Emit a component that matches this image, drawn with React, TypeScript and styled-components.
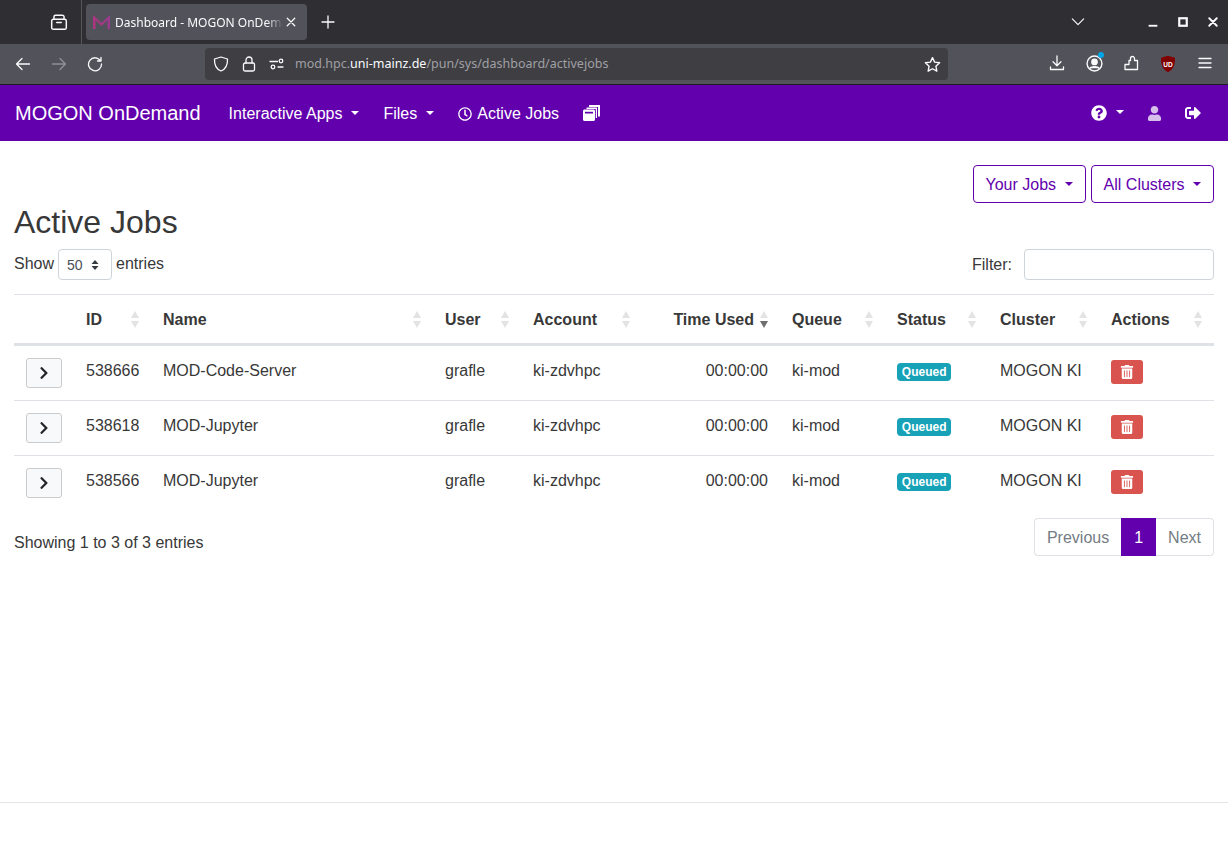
import React from 'react';
import styled, { createGlobalStyle } from 'styled-components';
import { FaChevronRight, FaQuestionCircle, FaRegClock, FaSignOutAlt, FaTrashAlt, FaUser } from 'react-icons/fa';

const PURPLE = '#6200ae';

const GlobalStyle = createGlobalStyle`
  * { box-sizing: border-box; }
  html, body { margin: 0; height: 100%; background: #fff; }
  body {
    font-family: "Liberation Sans", Arial, sans-serif;
    font-size: 16px;
    line-height: 26px;
    color: #383838;
    overflow: hidden;
  }
`;

const Page = styled.div`
  height: 851px;
  display: flex;
  flex-direction: column;
`;

// BROWSER CHROME
const TabBar = styled.div`
  height: 44px;
  display: flex;
  align-items: center;
  background: #2f2e33;
  color: #fbfbfe;
`;

const TabTools = styled.div`
  width: 82px;
  height: 44px;
  padding-right: 13px;
  display: flex;
  align-items: center;
  justify-content: flex-end;
  border-right: 1px solid #55555a;
`;

const Tab = styled.div`
  width: 221px;
  height: 36px;
  margin-left: 4px;
  padding: 0 9px 0 7px;
  display: flex;
  align-items: center;
  background: #52525a;
  border-radius: 4px;
  font-family: "Noto Sans", sans-serif;
  font-size: 12px;
`;

const TabTitle = styled.span`
  width: 168px;
  margin-left: 5px;
  padding-top: 2px;
  white-space: nowrap;
  overflow: hidden;
  -webkit-mask-image: linear-gradient(to right, #000 90%, transparent);
  mask-image: linear-gradient(to right, #000 90%, transparent);
`;

const TabClose = styled.span`
  margin-left: 2px;
  display: flex;
`;

const NewTab = styled.span`
  margin-left: 13px;
  display: flex;
`;

const WindowControls = styled.div`
  margin-left: auto;
  display: flex;
  align-items: center;
`;

const ListTabs = styled.span`
  margin-right: 53px;
  display: flex;
`;

const WinButton = styled.span`
  width: 30px;
  display: flex;
  justify-content: center;
`;

const Toolbar = styled.div`
  height: 41px;
  padding: 0 5px;
  display: flex;
  align-items: center;
  background: #52525a;
  border-bottom: 1px solid #1c1b22;
  color: #fbfbfe;
`;

const ToolSlot = styled.span<{ $dim?: boolean }>`
  position: relative;
  width: 36px;
  display: flex;
  justify-content: center;
  color: ${p => (p.$dim ? '#8f8f94' : '#fbfbfe')};
`;

const UrlBar = styled.div`
  width: 743px;
  height: 32px;
  margin-left: 92px;
  padding: 0 7px 0 2px;
  display: flex;
  align-items: center;
  background: #3e3e43;
  border-radius: 4px;
  font-family: "Noto Sans", sans-serif;
  font-size: 12.5px;
`;

const UrlIcon = styled.span`
  width: 28px;
  display: flex;
  justify-content: center;
`;

const UrlText = styled.span`
  margin-left: 4px;
  color: #a0a0a4;
  flex: 1;
`;

const UrlHost = styled.span`
  color: #fbfbfe;
`;

const ToolGroup = styled.div`
  margin-left: auto;
  display: flex;
  gap: 1px;
`;

const Dot = styled.span`
  position: absolute;
  top: -3px;
  right: 8px;
  width: 6px;
  height: 6px;
  border-radius: 50%;
  background: #00a6e8;
`;

// NAVBAR
const Nav = styled.nav`
  height: 56px;
  padding: 0 27px 0 15px;
  display: flex;
  align-items: center;
  background: ${PURPLE};
  color: #fff;
`;

const Brand = styled.a`
  margin-right: 28px;
  font-size: 20px;
`;

const NavLinks = styled.div`
  display: flex;
  align-items: center;
  gap: 24px;
`;

const NavLink = styled.a<{ $caret?: boolean; $muted?: boolean; $text?: boolean }>`
  display: flex;
  align-items: center;
  padding-top: ${p => (p.$text ? '2px' : '0')};
  color: ${p => (p.$muted ? 'rgba(255, 255, 255, 0.75)' : '#fff')};
  svg { display: block; }
  ${p =>
    p.$caret &&
    `&::after {
      content: '';
      margin-left: 9px;
      margin-top: ${p.$text ? '-3px' : '-2px'};
      border-top: 4.8px solid currentColor;
      border-left: 4.8px solid transparent;
      border-right: 4.8px solid transparent;
    }`}
`;

const ClockIcon = styled(FaRegClock)`
  width: 14px;
  height: 14px;
  margin-right: 5px;
`;

const NavRight = styled(NavLinks)`
  margin-left: auto;
  gap: 23px;
`;

// CONTENT
const Main = styled.main`
  flex: 1;
  padding: 24px 14px 0;
`;

const FilterButtons = styled.div`
  display: flex;
  justify-content: flex-end;
  gap: 5px;
`;

const OutlineButton = styled.button`
  height: 38px;
  padding: 2px 12px 0;
  display: flex;
  align-items: center;
  background: #fff;
  border: 1px solid ${PURPLE};
  border-radius: 4px;
  color: ${PURPLE};
  font: inherit;
  &::after {
    content: '';
    margin-left: 8.5px;
    margin-top: -3px;
    border-top: 4.8px solid currentColor;
    border-left: 4.8px solid transparent;
    border-right: 4.8px solid transparent;
  }
`;

const Title = styled.h1`
  margin: 0 0 8px;
  font-size: 32px;
  font-weight: 400;
  line-height: 38px;
`;

const Controls = styled.div`
  height: 31px;
  margin-bottom: 14px;
  display: flex;
  justify-content: space-between;
`;

const LengthLabel = styled.div`
  display: flex;
  align-items: flex-start;
  gap: 4px;
  line-height: 30px;
`;

const SelectBox = styled.div`
  width: 54px;
  height: 31px;
  padding: 0 0 0 8px;
  display: flex;
  align-items: center;
  gap: 8px;
  border: 1px solid #ced4da;
  border-radius: 4px;
  color: #495057;
  font-size: 14px;
`;

const FilterLabel = styled.label`
  display: flex;
  align-items: center;
  gap: 12px;
`;

const FilterInput = styled.input`
  width: 190px;
  height: 31px;
  border: 1px solid #ced4da;
  border-radius: 4px;
  background: #fff;
`;

const Table = styled.table`
  width: 100%;
  table-layout: fixed;
  border-collapse: separate;
  border-spacing: 0;
`;

const Th = styled.th`
  height: 52px;
  padding: 0 12px;
  border-top: 1px solid #dee2e6;
  border-bottom: 3px solid #dee2e6;
  font-weight: 700;
  text-align: left;
`;

const ThInner = styled.div<{ $right?: boolean }>`
  display: flex;
  align-items: center;
  justify-content: ${p => (p.$right ? 'flex-end' : 'space-between')};
  gap: ${p => (p.$right ? '6px' : '0')};
`;

const ThLabel = styled.span`
  padding-top: 2px;
`;

const SortArrows = styled.span`
  width: 8px;
  display: flex;
  flex-direction: column;
  gap: 3px;
`;

const Arrow = styled.span<{ $down?: boolean; $active?: boolean }>`
  width: 0;
  height: 0;
  border-left: 4px solid transparent;
  border-right: 4px solid transparent;
  ${p => (p.$down ? 'border-top' : 'border-bottom')}: 7px solid ${p => (p.$active ? '#6f6f6f' : '#e3e3e3')};
`;

const Tr = styled.tr`
  &:not(:last-child) td {
    border-bottom: 1px solid #dee2e6;
  }
`;

const Td = styled.td<{ $right?: boolean }>`
  padding: 12px;
  height: 54px;
  vertical-align: top;
  text-align: ${p => (p.$right ? 'right' : 'left')};
`;

const ExpandButton = styled.button`
  width: 36px;
  height: 30px;
  display: flex;
  align-items: center;
  justify-content: center;
  background: #f8f9fa;
  border: 1px solid #c9cbcd;
  border-radius: 3px;
  color: #212529;
  padding: 0;
`;

const Badge = styled.span`
  display: inline-block;
  margin-top: 5px;
  padding: 0 4.8px;
  height: 18px;
  background: #17a2b8;
  border-radius: 4px;
  color: #fff;
  font-size: 12px;
  font-weight: 700;
  line-height: 18px;
  vertical-align: top;
`;

const DeleteButton = styled.button`
  width: 32px;
  height: 24px;
  margin-top: 2px;
  display: flex;
  align-items: center;
  justify-content: center;
  padding: 0;
  border: none;
  border-radius: 3px;
  background: #d9534f;
  color: #fff;
`;

const TableFooter = styled.div`
  margin-top: 8px;
  display: flex;
  justify-content: space-between;
`;

const Info = styled.div`
  padding-top: 12px;
`;

const Pagination = styled.div`
  height: 38px;
  display: flex;
`;

const PageLink = styled.a<{ $active?: boolean; $pos?: 'first' | 'last' }>`
  padding: 2px 12px 0;
  display: flex;
  align-items: center;
  border: 1px solid ${p => (p.$active ? PURPLE : '#dee2e6')};
  border-left-width: ${p => (p.$pos === 'first' || p.$active ? '1px' : '0')};
  border-right-width: ${p => (p.$pos === 'last' || p.$active ? '1px' : '0')};
  border-radius: ${p => (p.$pos === 'first' ? '4px 0 0 4px' : p.$pos === 'last' ? '0 4px 4px 0' : '0')};
  background: ${p => (p.$active ? PURPLE : '#fff')};
  color: ${p => (p.$active ? '#fff' : '#747c84')};
`;

const Footer = styled.footer`
  height: 49px;
  border-top: 1px solid #e3e5e8;
`;

// drawn browser icons
const Stroke = ({ size = 16, children }: { size?: number; children: React.ReactNode }) => (
  <svg
    width={size}
    height={size}
    viewBox='0 0 16 16'
    fill='none'
    stroke='currentColor'
    strokeWidth='1.3'
    strokeLinecap='round'
    strokeLinejoin='round'>
    {children}
  </svg>
);

const MogonLogo = () => (
  <svg width='17' height='14' viewBox='0 0 17 14'>
    <defs>
      <linearGradient id='mogon' x1='0' x2='1' y1='0' y2='0'>
        <stop offset='0' stopColor='#b0347f' />
        <stop offset='1' stopColor='#9a3a8e' />
      </linearGradient>
    </defs>
    <path d='M0 14V0l8.500 8L17 0v14h-2.500V5L8.500 11 2.500 5v9z' fill='url(#mogon)' />
  </svg>
);

const UBlock = () => (
  <svg width='16' height='18' viewBox='0 0 16 18'>
    <path d='M8 .8 15 2.800c.2 7-1.500 11.500-7 14.400C2.500 14.300.8 9.800 1 2.800z' fill='#800000' />
    <text x='8' y='11.500' textAnchor='middle' fontSize='6.500' fontWeight='700' fill='#fff' fontFamily='Liberation Sans'>
      UD
    </text>
  </svg>
);

const CopyStack = () => (
  <svg width='17' height='16' viewBox='0 0 17 16'>
    <path d='M6 0h11v11.500h-2V2H6z' fill='#fff' />
    <path d='M3.500 2.500H14V13h-1.200V4H3.500z' fill='#fff' />
    <path d='M0 6c0-.8.7-1.500 1.500-1.500h9c.8 0 1.500.7 1.500 1.500v8.500c0 .8-.7 1.500-1.500 1.500h-9C.7 16 0 15.300 0 14.500z' fill='#fff' />
    <rect x='2' y='6.800' width='8' height='1.700' fill={PURPLE} />
  </svg>
);

const SelectArrows = () => (
  <svg width='8' height='12' viewBox='0 0 8 12'>
    <path d='M4 1 7.500 5h-7zM4 11 .5 7h7z' fill='#343a40' />
  </svg>
);

const Sort = ({ active }: { active?: boolean }) => (
  <SortArrows>
    <Arrow />
    <Arrow $down $active={active} />
  </SortArrows>
);

const columns = [
  { key: 'expand', label: '', width: 60 },
  { key: 'id', label: 'ID', width: 77 },
  { key: 'name', label: 'Name', width: 282 },
  { key: 'user', label: 'User', width: 88 },
  { key: 'account', label: 'Account', width: 121 },
  { key: 'time', label: 'Time Used', width: 138, right: true, active: true },
  { key: 'queue', label: 'Queue', width: 105 },
  { key: 'status', label: 'Status', width: 103 },
  { key: 'cluster', label: 'Cluster', width: 111 },
  { key: 'actions', label: 'Actions', width: 115 },
];

const jobs = [
  { id: '538666', name: 'MOD-Code-Server' },
  { id: '538618', name: 'MOD-Jupyter' },
  { id: '538566', name: 'MOD-Jupyter' },
];

const App = () => (
  <Page>
    <GlobalStyle />
    <TabBar>
      <TabTools>
        <Stroke size={18}>
          <path d='M3.500 5.500V3.500A1.500 1.500 0 0 1 5 2h6a1.500 1.500 0 0 1 1.500 1.500v2' />
          <rect x='1.500' y='5.500' width='13' height='9' rx='1.500' />
          <path d='M6 8.500h4' />
        </Stroke>
      </TabTools>
      <Tab>
        <MogonLogo />
        <TabTitle>Dashboard - MOGON OnDemand</TabTitle>
        <TabClose>
          <Stroke size={12}>
            <path d='M3 3l10 10M13 3 3 13' strokeWidth='1.700' />
          </Stroke>
        </TabClose>
      </Tab>
      <NewTab>
        <Stroke>
          <path d='M8 2v12M2 8h12' />
        </Stroke>
      </NewTab>
      <WindowControls>
        <ListTabs>
          <Stroke size={14}>
            <path d='M1.500 4.500 8 11l6.500-6.500' />
          </Stroke>
        </ListTabs>
        <WinButton>
          <Stroke size={10}>
            <path d='M1 14h14' strokeWidth='3' strokeLinecap='butt' />
          </Stroke>
        </WinButton>
        <WinButton>
          <Stroke size={10}>
            <rect x='2' y='2' width='12' height='12' strokeWidth='3.500' strokeLinejoin='miter' />
          </Stroke>
        </WinButton>
        <WinButton>
          <Stroke size={10}>
            <path d='M2 2l12 12M14 2 2 14' strokeWidth='3' />
          </Stroke>
        </WinButton>
      </WindowControls>
    </TabBar>

    <Toolbar>
      <ToolSlot>
        <Stroke>
          <path d='M14.500 8h-13M7 2.500 1.500 8 7 13.500' />
        </Stroke>
      </ToolSlot>
      <ToolSlot $dim>
        <Stroke>
          <path d='M1.500 8h13M9 2.500 14.500 8 9 13.500' />
        </Stroke>
      </ToolSlot>
      <ToolSlot>
        <Stroke>
          <path d='M13.500 4.800A6.500 6.500 0 1 0 14.500 8M14 1.500v3.500h-3.500' />
        </Stroke>
      </ToolSlot>
      <UrlBar>
        <UrlIcon>
          <Stroke>
            <path d='M8 1 14.500 3c.3 6-1.500 10-6.500 12C3 13 1.200 9 1.500 3z' />
          </Stroke>
        </UrlIcon>
        <UrlIcon>
          <Stroke>
            <rect x='2.500' y='7' width='11' height='8' rx='1.500' />
            <path d='M5 7V4a3 3 0 0 1 6 0v3' />
          </Stroke>
        </UrlIcon>
        <UrlIcon>
          <Stroke>
            <path d='M1 5.500h7.500M14 11H9' />
            <circle cx='12' cy='5' r='1.800' />
            <circle cx='4' cy='11' r='1.800' />
          </Stroke>
        </UrlIcon>
        <UrlText>
          mod.hpc.<UrlHost>uni-mainz.de</UrlHost>/pun/sys/dashboard/activejobs
        </UrlText>
        <Stroke size={17}>
          <path d='M8 1.500 10 5.800l4.700.6-3.500 3.200.9 4.700L8 12l-4.100 2.300.9-4.700-3.500-3.200L6 5.800z' />
        </Stroke>
      </UrlBar>
      <ToolGroup>
        <ToolSlot>
          <Stroke>
            <path d='M8 1v9.500M4 6.800 8 10.800l4-4M1.500 12v2.500h13V12' />
          </Stroke>
        </ToolSlot>
        <ToolSlot>
          <Stroke size={17}>
            <circle cx='8' cy='8' r='7' />
            <circle cx='8' cy='6.500' r='2.500' fill='currentColor' />
            <path d='M3.800 12.500c1-2 7.400-2 8.400 0' fill='currentColor' />
          </Stroke>
          <Dot />
        </ToolSlot>
        <ToolSlot>
          <Stroke>
            <path d='M2 14.500H14.500V5.500H11.500V3.500a2 2 0 0 0-4 0v2H6V9.500H2z' />
          </Stroke>
        </ToolSlot>
        <ToolSlot>
          <UBlock />
        </ToolSlot>
        <ToolSlot>
          <Stroke>
            <path d='M2 3.500h12M2 8h12M2 12.500h12' />
          </Stroke>
        </ToolSlot>
      </ToolGroup>
    </Toolbar>

    <Nav>
      <Brand>MOGON OnDemand</Brand>
      <NavLinks>
        <NavLink $caret $text>
          Interactive Apps
        </NavLink>
        <NavLink $caret $text>
          Files
        </NavLink>
        <NavLink $text>
          <ClockIcon />
          Active Jobs
        </NavLink>
        <NavLink>
          <CopyStack />
        </NavLink>
      </NavLinks>
      <NavRight>
        <NavLink $caret>
          <FaQuestionCircle size={16} />
        </NavLink>
        <NavLink $muted>
          <FaUser size={15} />
        </NavLink>
        <NavLink>
          <FaSignOutAlt size={16} />
        </NavLink>
      </NavRight>
    </Nav>

    <Main>
      <FilterButtons>
        <OutlineButton>Your Jobs</OutlineButton>
        <OutlineButton>All Clusters</OutlineButton>
      </FilterButtons>
      <Title>Active Jobs</Title>
      <Controls>
        <LengthLabel>
          Show
          <SelectBox>
            50
            <SelectArrows />
          </SelectBox>
          entries
        </LengthLabel>
        <FilterLabel>
          Filter:
          <FilterInput />
        </FilterLabel>
      </Controls>
      <Table>
        <colgroup>
          {columns.map(c => (
            <col key={c.key} width={c.width} />
          ))}
        </colgroup>
        <thead>
          <tr>
            {columns.map(c => (
              <Th key={c.key}>
                {c.label && (
                  <ThInner $right={c.right}>
                    <ThLabel>{c.label}</ThLabel>
                    <Sort active={c.active} />
                  </ThInner>
                )}
              </Th>
            ))}
          </tr>
        </thead>
        <tbody>
          {jobs.map(job => (
            <Tr key={job.id}>
              <Td>
                <ExpandButton>
                  <FaChevronRight size={14} />
                </ExpandButton>
              </Td>
              <Td>{job.id}</Td>
              <Td>{job.name}</Td>
              <Td>grafle</Td>
              <Td>ki-zdvhpc</Td>
              <Td $right>00:00:00</Td>
              <Td>ki-mod</Td>
              <Td>
                <Badge>Queued</Badge>
              </Td>
              <Td>MOGON KI</Td>
              <Td>
                <DeleteButton>
                  <FaTrashAlt size={14} />
                </DeleteButton>
              </Td>
            </Tr>
          ))}
        </tbody>
      </Table>
      <TableFooter>
        <Info>Showing 1 to 3 of 3 entries</Info>
        <Pagination>
          <PageLink $pos='first'>Previous</PageLink>
          <PageLink $active>1</PageLink>
          <PageLink $pos='last'>Next</PageLink>
        </Pagination>
      </TableFooter>
    </Main>
    <Footer />
  </Page>
);

export default App;
